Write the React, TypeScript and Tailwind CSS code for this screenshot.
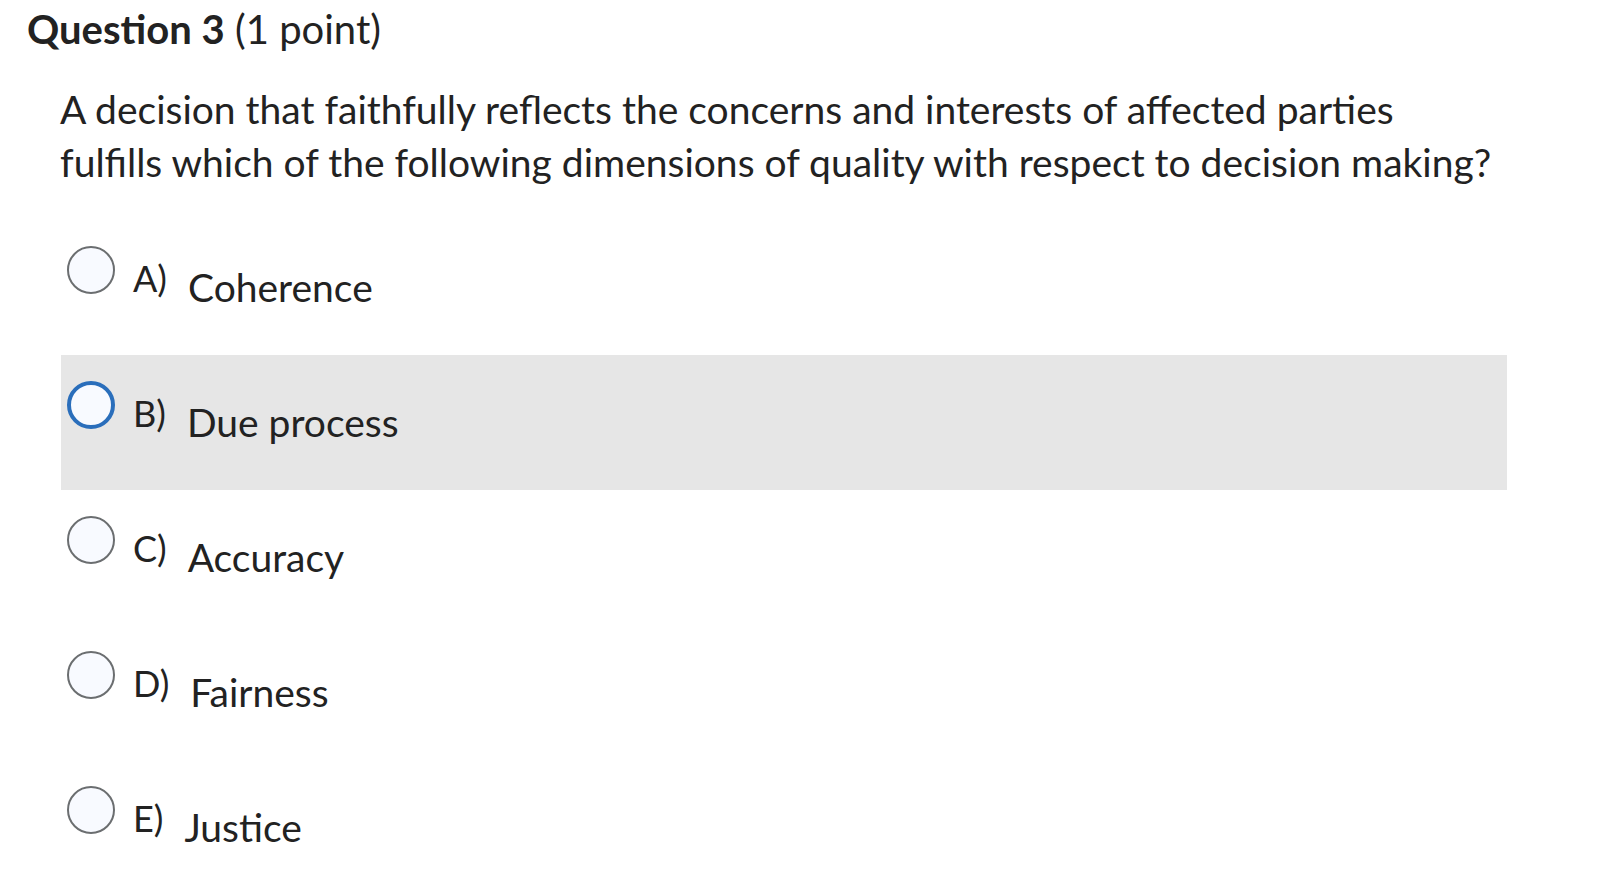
import React from 'react';

const options = [
  { letter: 'A)', text: 'Coherence' },
  { letter: 'B)', text: 'Due process', hover: true },
  { letter: 'C)', text: 'Accuracy' },
  { letter: 'D)', text: 'Fairness' },
  { letter: 'E)', text: 'Justice' },
];

export default function App() {
  return (
    <div className="w-[1616px] h-[896px] bg-white text-[#222222] overflow-hidden" style={{ fontFamily: 'Lato, "Open Sans", sans-serif' }}>
      {/* Header */}
      <h2 className="pl-[27px] pt-[5px] text-[40px] leading-[1.2]">
        <span className="font-bold">Question 3</span> <span>(1 point)</span>
      </h2>

      {/* Question text */}
      <p className="pl-[60px] mt-[30px] w-[1498px] text-[39px] leading-[53px]">
        A decision that faithfully reflects the concerns and interests of affected parties fulfills which of the following dimensions of quality with respect to decision making?
      </p>

      {/* Options */}
      <div className="ml-[61px] mt-[31px] w-[1446px] flex flex-col">
        {options.map((opt) => (
          <div key={opt.letter} className={`h-[135px] flex items-start ${opt.hover ? 'bg-[#e6e6e6]' : ''}`}>
            <div
              className={`ml-[6px] mt-[26px] w-[48px] h-[48px] rounded-full bg-[#f8faff] ${opt.hover ? 'border-[4px] border-[#2a6ebb]' : 'border-2 border-[#6b6e70]'}`}
            />
            <div className="ml-[18px] mt-[37px] text-[36px] leading-[1.2]">{opt.letter}</div>
            <div className="ml-[21px] mt-[44px] text-[39px] leading-[1.2]">{opt.text}</div>
          </div>
        ))}
      </div>
    </div>
  );
}
